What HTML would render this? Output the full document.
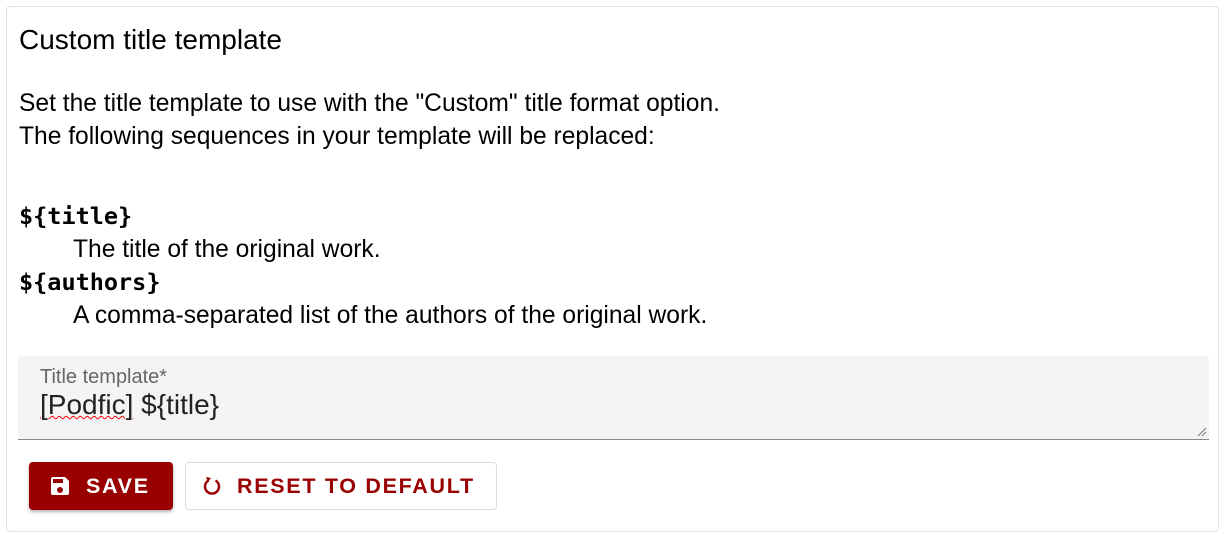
<!DOCTYPE html>
<html><head><style>
*{margin:0;padding:0;box-sizing:border-box}
body{width:1226px;height:541px;background:#fff;font-family:"Liberation Sans",sans-serif;color:#000;position:relative;overflow:hidden}
.card{position:absolute;left:6px;top:6px;width:1213px;height:526px;border:1px solid #e0e0e0;border-radius:4px}
.abs{position:absolute;white-space:nowrap}
.t{left:19px;top:23px;font-size:28px;line-height:34px}
.p{font-size:24.6px;line-height:33px}
.m{font-family:"DejaVu Sans Mono",monospace;font-weight:bold;font-size:23.5px;line-height:33px;left:19px}
.field{position:absolute;left:18px;top:356px;width:1191px;height:84px;background:#f4f4f4;border-radius:4px 4px 0 0;border-bottom:1px solid #8a8a8a}
.lab{left:22px;top:10px;font-size:20px;color:#666}
.val{left:22px;top:33px;font-size:28px;color:#222}
.btn{position:absolute;top:462px;height:48px;border-radius:4px;font-size:21.5px;font-weight:bold;letter-spacing:1.7px;display:flex;align-items:center}
.save{left:29px;width:144px;background:#990000;color:#fff;box-shadow:0 2px 3px rgba(0,0,0,.3)}
.reset{left:185px;width:312px;border:1px solid #ddd;color:#990000}
</style></head><body>
<div class="card"></div>
<div class="abs t">Custom title template</div>
<div class="abs p" style="left:19px;top:87px">Set the title template to use with the "Custom" title format option.</div>
<div class="abs p" style="left:19px;top:120px">The following sequences in your template will be replaced:</div>
<div class="abs m" style="top:200px">${title}</div>
<div class="abs p" style="left:73px;top:233px">The title of the original work.</div>
<div class="abs m" style="top:266px">${authors}</div>
<div class="abs p" style="left:73px;top:299px">A comma-separated list of the authors of the original work.</div>
<div class="field">
<div class="abs lab">Title template*</div>
<div class="abs val"><span style="text-decoration:underline wavy red;text-decoration-thickness:1px">[Podfic]</span> ${title}</div>
<svg style="position:absolute;right:2px;bottom:2px" width="10" height="10"><path d="M9 1L1 9M9 5L5 9" stroke="#777" stroke-width="1"/></svg>
</div>
<div class="btn save"><svg style="margin-left:19px;margin-right:14px" width="24" height="24" viewBox="0 0 24 24"><path fill="#fff" d="M17 3H5a2 2 0 0 0-2 2v14a2 2 0 0 0 2 2h14a2 2 0 0 0 2-2V7l-4-4zm-5 16a3 3 0 1 1 0-6 3 3 0 0 1 0 6zm3-10H5V5h10v4z"/></svg>SAVE</div>
<div class="btn reset"><svg style="margin-left:14px;margin-right:13px" width="24" height="24" viewBox="0 0 24 24"><path fill="none" stroke="#990000" stroke-width="2.4" d="M8.5 6.5A7 7 0 1 0 15.5 6.5"/><path fill="#990000" d="M6 3l5 1-3 4z"/></svg>RESET TO DEFAULT</div>
</body></html>
